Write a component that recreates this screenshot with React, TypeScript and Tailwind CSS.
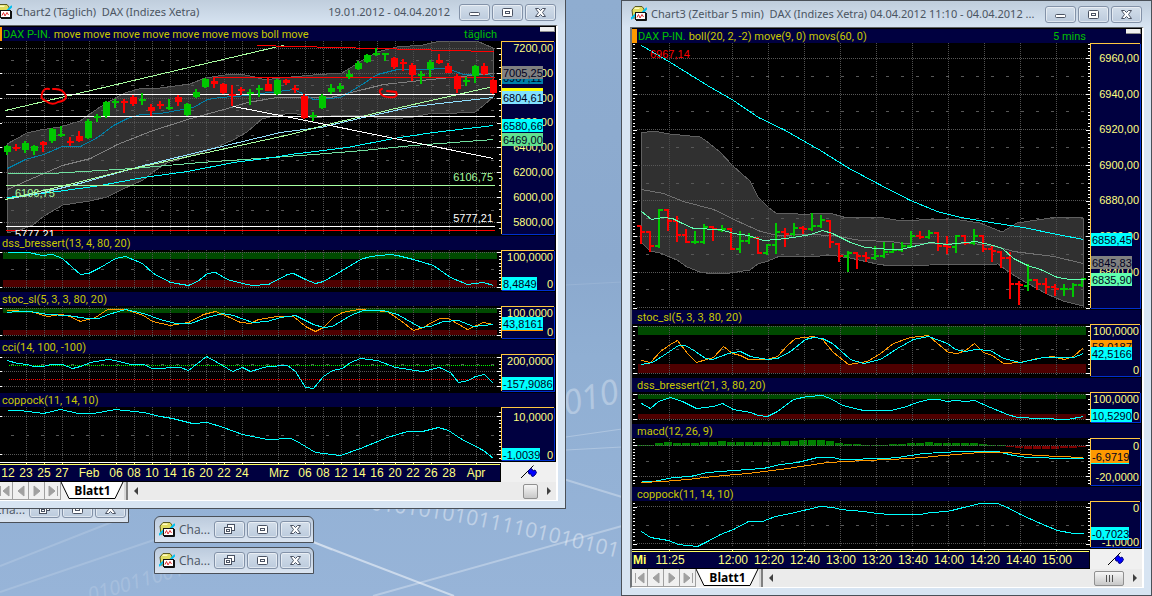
import React from 'react';

type Point = [number, number];

interface Line {
  color: string;
  points: string;
  width?: number;
}

interface Tag {
  text: string;
  y: number;
  color: string;
  width?: number;
}

interface PanelData {
  title: string;
  top: number;
  height: number;
  levels: number[];
  mids?: number[];
  ticks: { from: number; step: number; count: number };
  zones?: { y: number; height: number; color: string }[];
  lines: Line[];
  labels: [string, number][];
  tags: Tag[];
}

interface ChartLayout {
  x: number;
  plotEnd: number;
  right: number;
  columns: number[];
}

const CYAN = '#00ffff';
const ORANGE = '#ff9900';
const GREEN = '#00c800';
const RED = '#ff0000';

const GREEN_ZONE = '#004a00';
const RED_ZONE = '#4e0000';

const daily: ChartLayout = {
  x: -3,
  plotEnd: 501,
  right: 556,
  columns: [26, 44, 62, 89, 116, 134, 152, 170, 188, 206, 224, 242, 278, 305, 323, 341, 359, 377, 395, 413, 431, 449, 476],
};

const intraday: ChartLayout = {
  x: 632,
  plotEnd: 1090,
  right: 1142,
  columns: [669, 732, 768, 804, 840, 876, 912, 948, 984, 1020, 1056],
};

// direction, high, low, body top, body bottom
const candles: [string, number, number, number, number][] = [
  ['g', 145, 155, 146, 152], ['r', 144, 151, 147, 149], ['g', 141, 153, 143, 150], ['g', 145, 155, 146, 151],
  ['r', 141, 152, 142, 145], ['g', 128, 143, 129, 141], ['g', 126, 137, 134, 136], ['r', 137, 146, 141, 143],
  ['r', 131, 142, 136, 141], ['g', 119, 139, 121, 138], ['g', 114, 122, 116, 118], ['g', 101, 118, 102, 116],
  ['g', 99, 108, 101, 103], ['r', 99, 113, 101, 103], ['r', 95, 106, 97, 104], ['g', 93, 105, 99, 101],
  ['r', 104, 116, 107, 111], ['r', 101, 109, 104, 106], ['g', 99, 110, 107, 109], ['r', 95, 106, 97, 102],
  ['g', 103, 116, 104, 115], ['g', 89, 98, 92, 97], ['g', 78, 88, 79, 87], ['r', 77, 88, 81, 84],
  ['r', 83, 94, 84, 93], ['r', 85, 106, 94, 96], ['r', 87, 95, 89, 91], ['g', 89, 105, 92, 94],
  ['g', 85, 97, 88, 90], ['r', 77, 91, 84, 91], ['g', 79, 95, 80, 94], ['r', 79, 85, 80, 83],
  ['r', 85, 93, 88, 90], ['r', 94, 119, 96, 118], ['g', 112, 121, 115, 117], ['g', 94, 109, 96, 108],
  ['g', 84, 94, 88, 92], ['g', 83, 92, 86, 89], ['g', 70, 79, 74, 77], ['g', 61, 70, 63, 69],
  ['g', 54, 63, 55, 62], ['g', 48, 56, 53, 55], ['g', 53, 61, 53, 55], ['r', 57, 69, 58, 67],
  ['r', 59, 71, 62, 64], ['r', 63, 81, 65, 75], ['g', 71, 84, 74, 76], ['g', 60, 77, 62, 69],
  ['r', 54, 64, 60, 63], ['r', 63, 73, 66, 73], ['r', 74, 93, 76, 89], ['g', 77, 86, 80, 82],
  ['g', 65, 83, 66, 76], ['r', 63, 75, 66, 74], ['r', 79, 94, 80, 93],
];

// direction, open, high, low, close
const bars: [string, number, number, number, number][] = [
  ['r', 226, 226, 243, 232], ['r', 232, 231, 251, 246], ['g', 246, 209, 247, 210], ['r', 210, 209, 230, 221],
  ['r', 221, 216, 241, 235], ['r', 235, 229, 242, 242], ['g', 242, 231, 243, 242], ['g', 242, 224, 243, 227],
  ['r', 227, 226, 240, 229], ['g', 230, 225, 231, 229], ['r', 229, 228, 249, 249], ['g', 249, 231, 252, 241],
  ['g', 241, 233, 243, 237], ['r', 238, 237, 253, 253], ['g', 253, 244, 254, 245], ['g', 245, 223, 253, 232],
  ['r', 232, 228, 246, 234], ['g', 234, 223, 235, 228], ['r', 228, 226, 233, 229], ['g', 229, 213, 230, 226],
  ['g', 226, 215, 227, 220], ['r', 221, 220, 247, 242], ['r', 244, 243, 261, 256], ['g', 256, 251, 271, 253],
  ['r', 253, 252, 268, 256], ['r', 256, 252, 261, 258], ['g', 258, 246, 259, 256], ['g', 256, 242, 257, 252],
  ['g', 252, 243, 252, 250], ['g', 250, 242, 251, 246], ['g', 246, 231, 247, 236], ['r', 236, 231, 238, 237],
  ['g', 237, 230, 238, 233], ['r', 233, 232, 250, 246], ['r', 246, 236, 253, 247], ['g', 247, 235, 252, 236],
  ['r', 236, 235, 244, 243], ['g', 243, 229, 244, 236], ['r', 236, 235, 251, 249], ['r', 249, 246, 261, 251],
  ['r', 252, 251, 267, 258], ['r', 258, 252, 298, 284], ['r', 284, 281, 304, 285], ['g', 286, 264, 290, 280],
  ['r', 280, 279, 289, 284], ['r', 284, 278, 293, 287], ['r', 287, 284, 295, 289], ['g', 289, 284, 295, 289],
  ['g', 289, 283, 296, 285], ['g', 285, 278, 286, 279],
];

const histogram = [
  1, 1, 3, 4, 3, 3, 3, 4, 4, 5, 4, 4, 4, 4, 4, 4, 5, 5, 6, 6, 6, 5, 3, 2, 2, 1, 1, 1, 2, 2, 3, 3, 4, 3, 3, 3, 3, 3, 2, 1, 1,
  -1, -2, -3, -3, -3, -3, -2, -2, -1,
];

const dailyPanels: PanelData[] = [
  {
    title: 'price',
    top: 41,
    height: 195,
    levels: [48, 73, 98, 122, 147, 172, 197, 222],
    mids: [60, 85, 110, 135, 160, 185, 210],
    ticks: { from: 48, step: 6.21, count: 30 },
    lines: [
      { color: '#808080', points: '7,189 27,180 62,165 90,158 117,144 150,131 187,119 227,108 247,102 277,97 300,97 330,97 363,89 383,84 430,79 493,73' },
      { color: '#0080a8', points: '7,168 25,159 43,154 62,146 80,146 97,137 113,125 127,118 140,114 160,113 193,107 207,99 220,97 247,95 260,93 278,91 293,89 300,92 313,99 340,97 357,87 377,74 397,69 420,69 447,68 463,74 487,73 493,77' },
      { color: '#a8ffa0', points: '5,110 278,46 284,45' },
      { color: '#70e0a0', points: '7,173 50,173 133,168 200,162 273,157 313,154 363,150 413,145 493,139' },
      { color: CYAN, points: '7,197 57,191 100,185 143,177 187,171 233,162 273,157 290,154 347,147 393,138 433,132 493,125' },
      { color: '#90e0ff', points: '5,199 43,192 83,182 143,165 213,148 280,132 320,127 363,117 413,106 457,101 493,97' },
      { color: '#a8ffa0', points: '5,199 60,186 133,168 290,134 323,125 395,108 493,86' },
      { color: '#ffffff', points: '5,94 494,94' },
      { color: '#ffffff', points: '5,116 494,116' },
      { color: '#ffffff', points: '5,226 494,226' },
      { color: '#a8ffa0', points: '5,185 494,185' },
      { color: RED, points: '5,230 494,230' },
      { color: RED, points: '256,45 275,45 276,46 316,46 317,47 355,47 356,48 396,48 397,49 430,49 431,50 470,50 471,51 493,51' },
      { color: RED, points: '213,77 494,77' },
      { color: '#ffffff', points: '233,106 290,117 493,158' },
    ],
    labels: [['7200,00', 48], ['7000,00', 73], ['6800,00', 98], ['6600,00', 122], ['6400,00', 147], ['6200,00', 172], ['6000,00', 197], ['5800,00', 222]],
    tags: [
      { text: '6967,11', y: 71, color: '#0080a8' },
      { text: '7005,25', y: 66, color: '#808080' },
      { text: '', y: 88, color: '#ffff00' },
      { text: '6804,61', y: 91, color: '#80e0ff' },
      { text: '6580,66', y: 119, color: CYAN },
      { text: '6469,00', y: 133, color: '#60e090' },
    ],
  },
  {
    title: 'dss_bressert(13, 4, 80, 20)',
    top: 250,
    height: 42,
    levels: [252, 287],
    mids: [269],
    ticks: { from: 252, step: 3.5, count: 11 },
    zones: [{ y: 252, height: 7, color: GREEN_ZONE }, { y: 280, height: 7, color: RED_ZONE }],
    lines: [
      { color: CYAN, points: '7,252 28,252 42,255 52,254 62,258 80,274 88,273 100,267 115,258 125,256 142,263 153,273 170,282 188,285 197,281 207,273 215,272 227,279 242,283 252,285 268,284 287,274 293,273 305,279 315,283 323,281 342,270 360,259 370,256 390,254 397,255 413,259 433,265 450,277 467,284 483,282 493,285' },
    ],
    labels: [['100,0000', 257], ['0', 284]],
    tags: [{ text: '8,4849', y: 277, color: CYAN, width: 35 }],
  },
  {
    title: 'stoc_sl(5, 3, 3, 80, 20)',
    top: 306,
    height: 34,
    levels: [308, 335],
    ticks: { from: 308, step: 2.7, count: 11 },
    zones: [{ y: 308, height: 5, color: GREEN_ZONE }, { y: 330, height: 5, color: RED_ZONE }],
    lines: [
      { color: ORANGE, points: '7,310 30,311 47,316 60,314 67,315 80,321 95,317 107,309 125,309 143,315 152,321 170,325 188,322 203,314 215,311 227,316 240,322 250,323 258,319 277,316 293,316 305,326 315,331 323,327 333,317 342,312 358,309 387,311 400,320 413,330 423,327 433,321 440,318 448,318 467,329 483,322 493,324' },
      { color: CYAN, points: '7,312 17,311 30,311 47,314 67,315 87,318 98,318 108,314 125,309 143,313 160,319 175,323 190,323 207,317 222,313 233,315 252,322 267,321 280,317 295,315 313,324 323,327 332,326 350,315 363,310 383,310 397,314 420,327 430,326 443,321 458,320 473,326 493,324' },
    ],
    labels: [['100,0000', 313], ['0', 332]],
    tags: [
      { text: '', y: 318, color: ORANGE },
      { text: '43,8161', y: 317, color: CYAN },
    ],
  },
  {
    title: 'cci(14, 100, -100)',
    top: 354,
    height: 39,
    levels: [357, 371, 386],
    mids: [364],
    ticks: { from: 357, step: 3.6, count: 9 },
    lines: [
      { color: CYAN, points: '7,360 17,363 27,364 33,366 43,366 50,364 62,364 72,368 80,366 90,362 107,359 115,360 130,364 143,364 152,368 180,367 188,370 197,363 206,356 217,362 232,371 242,367 250,371 267,366 287,365 295,371 305,387 313,388 323,376 332,370 342,368 350,362 360,358 377,360 395,367 422,371 439,367 450,372 458,382 468,380 475,376 484,374 493,383' },
    ],
    labels: [['200,0000', 361]],
    tags: [{ text: '-157,9086', y: 377, color: CYAN, width: 51 }],
  },
  {
    title: 'coppock(11, 14, 10)',
    top: 407,
    height: 55,
    levels: [416, 454],
    mids: [435],
    ticks: { from: 412, step: 3.8, count: 13 },
    lines: [
      { color: CYAN, points: '7,410 20,410 43,413 60,409 78,413 93,413 115,409 143,412 160,416 172,418 192,423 207,422 223,427 242,434 267,439 290,438 295,440 315,452 340,455 360,448 387,437 407,431 422,431 438,427 448,430 460,438 483,450 493,458' },
    ],
    labels: [['10,0000', 417], ['0', 455]],
    tags: [{ text: '-1,0039', y: 448, color: CYAN, width: 38 }],
  },
];

const intradayPanels: PanelData[] = [
  {
    title: 'price',
    top: 43,
    height: 267,
    levels: [58, 94, 129, 165, 200, 236, 272, 307],
    mids: [76, 111, 147, 183, 218, 254, 289],
    ticks: { from: 44.2, step: 3.56, count: 75 },
    lines: [
      { color: '#707070', points: '641,189 663,193 683,201 713,209 740,222 760,231 777,235 807,234 833,235 860,240 890,241 903,243 930,243 973,243 1000,247 1013,251 1053,256 1083,263' },
      { color: CYAN, points: '641,45 670,62 707,85 733,100 758,117 783,129 820,150 847,167 877,183 910,200 937,211 960,217 997,223 1023,227 1057,234 1083,239' },
    ],
    labels: [['6960,00', 58], ['6940,00', 94], ['6920,00', 129], ['6900,00', 165], ['6880,00', 200], ['6860,00', 236], ['6840,00', 272]],
    tags: [
      { text: '6858,45', y: 233, color: CYAN },
      { text: '6845,83', y: 256, color: '#808080' },
      { text: '6835,90', y: 273, color: '#60ffb0' },
    ],
  },
  {
    title: 'stoc_sl(5, 3, 3, 80, 20)',
    top: 324,
    height: 54,
    levels: [326, 373],
    mids: [349],
    ticks: { from: 326, step: 4.7, count: 11 },
    zones: [{ y: 326, height: 9, color: GREEN_ZONE }, { y: 364, height: 9, color: RED_ZONE }],
    lines: [
      { color: ORANGE, points: '641,360 650,362 660,351 670,344 677,340 687,353 696,362 713,357 723,346 732,353 740,355 748,359 767,359 777,356 787,345 795,338 813,336 822,339 833,352 848,364 867,361 880,353 893,343 910,337 928,335 937,343 948,352 957,353 965,350 974,343 983,352 992,355 1003,363 1020,362 1037,358 1052,356 1064,359 1073,356 1083,347' },
      { color: CYAN, points: '641,364 652,362 663,355 678,345 685,345 695,351 705,358 712,359 728,353 740,351 750,356 767,359 777,358 790,351 805,339 813,337 822,338 832,343 840,350 850,359 863,363 880,359 897,348 913,339 928,336 947,343 955,349 965,351 975,349 990,350 1003,358 1020,362 1043,357 1073,357 1083,353' },
    ],
    labels: [['100,0000', 331], ['0', 370]],
    tags: [
      { text: '58,0187', y: 340, color: ORANGE },
      { text: '42,5166', y: 347, color: CYAN },
    ],
  },
  {
    title: 'dss_bressert(21, 3, 80, 20)',
    top: 392,
    height: 32,
    levels: [394, 419],
    ticks: { from: 394, step: 5, count: 6 },
    zones: [{ y: 394, height: 5, color: GREEN_ZONE }, { y: 414, height: 5, color: RED_ZONE }],
    lines: [
      { color: CYAN, points: '641,403 650,408 658,401 670,397 682,401 696,408 713,406 722,403 733,409 750,412 758,415 767,416 777,411 793,399 807,396 822,395 832,399 842,405 863,410 890,410 903,407 917,402 928,399 938,399 947,401 955,400 965,401 974,400 990,407 1007,414 1017,417 1040,418 1067,419 1083,416' },
    ],
    labels: [['100,0000', 399], ['0', 416]],
    tags: [{ text: '10,5290', y: 409, color: CYAN }],
  },
  {
    title: 'macd(12, 26, 9)',
    top: 438,
    height: 49,
    levels: [445, 476],
    mids: [461],
    ticks: { from: 439.2, step: 3.1, count: 15 },
    lines: [
      { color: CYAN, points: '641,481 653,481 673,477 690,476 707,472 720,471 747,469 763,468 780,464 797,462 817,457 833,457 840,459 885,458 897,457 923,453 960,451 997,451 1013,455 1027,457 1070,458 1083,458' },
      { color: ORANGE, points: '641,482 663,481 687,479 713,476 747,473 780,469 807,465 827,462 847,461 863,460 890,459 923,457 943,455 980,452 1007,452 1023,454 1057,456 1083,457' },
    ],
    labels: [['0', 446], ['-20,0000', 477]],
    tags: [
      { text: '', y: 451, color: CYAN, width: 38 },
      { text: '-6,9719', y: 450, color: ORANGE, width: 38 },
    ],
  },
  {
    title: 'coppock(11, 14, 10)',
    top: 501,
    height: 48,
    levels: [506, 543],
    mids: [525],
    ticks: { from: 502.8, step: 3.7, count: 12 },
    lines: [
      { color: CYAN, points: '641,531 650,537 668,540 678,544 697,546 707,541 720,534 733,529 748,521 762,521 775,516 790,513 820,506 833,507 840,509 863,511 877,513 890,514 920,514 930,512 947,511 963,507 980,503 997,503 1007,507 1020,514 1040,523 1057,530 1073,533 1083,533' },
    ],
    labels: [['0', 508], ['-1,0000', 542]],
    tags: [{ text: '-0,7023', y: 527, color: CYAN, width: 38 }],
  },
];

const dailyBand =
  '7,144 27,133 40,130 60,127 80,121 100,107 110,101 125,93 142,88 160,88 190,84 205,78 225,75 240,74 255,77 265,80 280,78 313,75 342,73 363,60 377,52 397,47 423,45 440,41 477,41 493,48 493,97 483,106 475,112 457,113 433,113 413,117 393,119 377,118 367,115 340,115 313,118 293,113 277,115 262,119 247,132 233,140 210,150 187,157 167,163 153,172 143,180 123,189 107,197 90,201 63,205 44,216 33,225 20,230 7,233';

const intradayBand =
  '641,133 653,131 670,134 700,137 705,140 720,152 733,166 742,174 750,181 758,197 768,207 777,214 793,213 803,215 817,213 833,214 847,218 877,217 890,219 902,221 937,219 953,219 980,223 1002,232 1017,223 1057,217 1083,218 1083,306 1063,301 1047,294 1027,283 1010,273 998,264 930,265 890,266 877,264 850,258 830,255 820,256 780,256 768,261 758,264 750,270 730,273 713,274 700,272 687,267 677,260 660,253 650,251 641,242';

const dailyTimes: [string, number][] = [
  ['12', 8], ['23', 26], ['25', 44], ['27', 62], ['Feb', 89], ['06', 116], ['08', 134], ['10', 152], ['14', 170], ['16', 188],
  ['20', 206], ['22', 224], ['24', 242], ['Mrz', 279], ['06', 305], ['08', 323], ['12', 341], ['14', 359], ['16', 377],
  ['20', 395], ['22', 413], ['26', 431], ['28', 449], ['Apr', 476],
];

const intradayTimes: [string, number][] = [
  ['11:25', 670], ['12:00', 733], ['12:20', 769], ['12:40', 805], ['13:00', 841], ['13:20', 877], ['13:40', 913],
  ['14:00', 949], ['14:20', 985], ['14:40', 1021], ['15:00', 1057],
];

const ChartIcon = () => (
  <svg width="16" height="16" viewBox="0 0 16 16" className="shrink-0" aria-hidden="true">
    <path d="M1 4 L4 0.5 H11 L13 3 V12 H2 Z" fill="#e0dc60" stroke="#5a5a20" strokeWidth="1" />
    <path d="M4 1.5 H9 L8 3 H3 Z" fill="#fffbc0" />
    <path d="M0 13 L5 8 M11 7 L16 2" stroke="#00c0f0" strokeWidth="2" />
    <rect x="4.5" y="6.5" width="10" height="7" fill="#fff" stroke="#111" />
    <path d="M5 14.5 H15.5 V7" fill="none" stroke="#111" strokeWidth="1" />
    <path d="M6 11.5 L7.5 8.5 L9 12 L11 8.5 L12.5 11" fill="none" stroke="#e03030" strokeWidth="1" />
  </svg>
);

type Glyph = 'minimize' | 'restore' | 'maximize' | 'close';

const glyphLabels: Record<Glyph, string> = {
  minimize: 'Minimieren',
  restore: 'Wiederherstellen',
  maximize: 'Maximieren',
  close: 'Schließen',
};

const CaptionButton: React.FC<{ glyph: Glyph }> = ({ glyph }) => (
  <button
    type="button"
    aria-label={glyphLabels[glyph]}
    className="flex h-[17px] w-[31px] items-center justify-center rounded-[3px] border border-[#8392a8] bg-linear-to-b from-[#d3deea] to-[#bccbdd] shadow-[inset_0_0_0_1px_rgba(255,255,255,0.5)]"
  >
    <svg width="13" height="11" viewBox="0 0 13 11" fill="#fff" stroke="#4a5262">
      {glyph === 'minimize' && <rect x="1.5" y="5.5" width="10" height="3" rx="1" />}
      {glyph === 'maximize' && (
        <>
          <rect x="1.5" y="1.5" width="10" height="8" rx="1" />
          <rect x="4.5" y="4.5" width="4" height="2" />
        </>
      )}
      {glyph === 'restore' && (
        <>
          <rect x="4.5" y="0.5" width="7" height="6" />
          <rect x="1.5" y="3.5" width="7" height="6" />
          <rect x="3.5" y="5.5" width="3" height="2" />
        </>
      )}
      {glyph === 'close' && (
        <path d="M1.5 1.5 H4.5 L6.5 3.5 L8.5 1.5 H11.5 L8.5 5.5 L11.5 9.5 H8.5 L6.5 7.5 L4.5 9.5 H1.5 L4.5 5.5 Z" />
      )}
    </svg>
  </button>
);

const pairs = (points: string): Point[] => points.split(' ').map((p) => p.split(',').map(Number) as Point);

const shift = (points: string) => pairs(points).map(([x, y]) => `${x + 0.5},${y + 0.5}`).join(' ');

const PlotGrid: React.FC<{ panel: PanelData; layout: ChartLayout }> = ({ panel, layout }) => {
  const end = layout.plotEnd - 4;
  return (
    <g fill="none">
      {layout.columns.map((x) => (
        <path key={x} d={`M${x + 0.5} ${panel.top} V${panel.top + panel.height - 2}`} stroke="#505050" strokeDasharray="1 1" />
      ))}
      {panel.levels.map((y) => (
        <path key={y} d={`M${layout.x + 5} ${y + 0.5} H${end}`} stroke="#585858" strokeDasharray="1 1" />
      ))}
      {panel.mids?.map((y) => (
        <path key={y} d={`M${layout.x + 14} ${y + 0.5} H${end}`} stroke="#585858" strokeDasharray="3 12" />
      ))}
    </g>
  );
};

const Ticks: React.FC<{ panel: PanelData; layout: ChartLayout }> = ({ panel, layout }) => {
  const { from, step, count } = panel.ticks;
  const nearLevel = (y: number) => panel.levels.some((l) => Math.abs(l - y) < step / 2);
  return (
    <g fill="#fff">
      {Array.from({ length: count }, (_, i) => Math.round(from + i * step)).map((y) => {
        const size = nearLevel(y) ? 4 : 2;
        return (
          <g key={y}>
            <rect x={layout.plotEnd - size} y={y} width={size} height="1" />
            <rect x={layout.x + 1} y={y} width={size} height="1" />
          </g>
        );
      })}
    </g>
  );
};

const Axis: React.FC<{ panel: PanelData; layout: ChartLayout }> = ({ panel, layout }) => {
  const width = layout.right - layout.plotEnd;
  const bottom = panel.top + panel.height - 2;
  return (
    <svg
      width={width}
      height={panel.height}
      viewBox={`${layout.plotEnd} ${panel.top} ${width} ${panel.height}`}
      className="shrink-0 font-['Liberation_Sans',sans-serif] text-[11px]"
      shapeRendering="crispEdges"
    >
      <rect x={layout.plotEnd} y={panel.top} width={width - 1} height={panel.height - 1} fill="#000040" />
      {panel.labels.map(([text, y]) => (
        <text key={text} x={layout.right - 3} y={y + 4} textAnchor="end" fill="#ffff80">
          {text}
        </text>
      ))}
      {panel.tags.map((tag) => (
        <g key={tag.text + tag.y}>
          <rect x={layout.plotEnd + 1} y={tag.y} width={tag.width ?? 41} height="13" fill={tag.color} />
          {tag.text && (
            <text x={layout.plotEnd + 2} y={tag.y + 11} fill="#000020">
              {tag.text}
            </text>
          )}
        </g>
      ))}
      <path d={`M${layout.plotEnd} ${panel.top + 0.5} H${layout.right - 2} M${layout.plotEnd + 0.5} ${panel.top} V${bottom}`} stroke="#ffc840" />
      <path d={`M${layout.plotEnd + 1} ${bottom + 0.5} H${layout.right - 1} M${layout.right - 1.5} ${panel.top + 1} V${bottom}`} stroke="#0030d0" />
    </svg>
  );
};

const Candles = () => (
  <g>
    {candles.map(([dir, high, low, top, bottom], i) => (
      <g key={i} fill={dir === 'g' ? GREEN : RED}>
        <rect x={6 + i * 9} y={high} width="2" height={low - high} />
        <rect x={4 + i * 9} y={top} width="7" height={bottom - top} />
      </g>
    ))}
  </g>
);

const Bars = () => (
  <g>
    {bars.map(([dir, open, high, low, close], i) => (
      <g key={i} fill={dir === 'g' ? GREEN : RED}>
        <rect x={640 + i * 9} y={high} width="2" height={low - high + 1} />
        <rect x={637 + i * 9} y={open - 1} width="4" height="2" />
        <rect x={641 + i * 9} y={close - 1} width="4" height="2" />
      </g>
    ))}
  </g>
);

interface PanelProps {
  panel: PanelData;
  layout: ChartLayout;
  header?: React.ReactNode;
  back?: React.ReactNode;
  front?: React.ReactNode;
}

const Panel: React.FC<PanelProps> = ({ panel, layout, header, back, front }) => (
  <section>
    <h2 className="relative mr-px flex h-[14px] items-stretch overflow-hidden bg-[#000040] pl-[5px] font-['Roboto',sans-serif] text-[11px] leading-[16px] whitespace-pre text-[#c8c800]">
      {header ?? panel.title}
    </h2>
    <div className="flex">
      <svg
        height={panel.height}
        viewBox={`${layout.x} ${panel.top} ${layout.plotEnd - layout.x} ${panel.height}`}
        preserveAspectRatio="xMaxYMin meet"
        className="min-w-0 flex-1 font-['Liberation_Sans',sans-serif] text-[11px]"
        shapeRendering="crispEdges"
      >
        {back}
        {panel.zones?.map((zone) => (
          <rect key={zone.y} x={layout.x + 6} y={zone.y} width={layout.plotEnd - layout.x - 10} height={zone.height} fill={zone.color} />
        ))}
        <PlotGrid panel={panel} layout={layout} />
        {panel.lines.map((line, i) => (
          <polyline key={i} points={shift(line.points)} fill="none" stroke={line.color} strokeWidth={line.width ?? 1} />
        ))}
        {front}
        <Ticks panel={panel} layout={layout} />
      </svg>
      <Axis panel={panel} layout={layout} />
    </div>
  </section>
);

interface TimeAxisProps {
  layout: ChartLayout;
  times: [string, number][];
  day?: string;
}

const TimeAxis: React.FC<TimeAxisProps> = ({ layout, times, day }) => {
  const width = layout.plotEnd - layout.x;
  return (
    <div className="flex h-[20px]">
      <svg
        height="20"
        viewBox={`${layout.x} 0 ${width} 20`}
        preserveAspectRatio="xMaxYMin meet"
        className="min-w-0 flex-1 font-['Liberation_Sans',sans-serif] text-[12px]"
        shapeRendering="crispEdges"
      >
        <rect x={layout.x} y="3" width={width - 1} height="16" fill="#000040" />
        <rect x={layout.x} y="0" width={width} height="1" fill="#fff" />
        <rect x={layout.x} y="2" width={width - 1} height="1" fill="#ffff60" />
        {layout.columns.map((x) => (
          <rect key={x} x={x} y="1" width="1" height="2" fill="#ffff60" />
        ))}
        {day && (
          <text x={layout.x + 1} y="15" fill="#ffff60" fontWeight="bold">
            {day}
          </text>
        )}
        {times.map(([text, x]) => (
          <text key={x} x={x} y="15" textAnchor="middle" fill="#ffff80">
            {text}
          </text>
        ))}
      </svg>
      <div className="flex shrink-0 items-center justify-center bg-[#f0f0f0]" style={{ width: layout.right - layout.plotEnd }}>
        <svg width="18" height="14" viewBox="0 0 18 14" aria-hidden="true">
          <path d="M1 13 L13.5 0.5" stroke="#000" />
          <path d="M8 6 L11 3.5 L12 4 L13 6 L15 5 L16.5 7.5 L15 10 L13 11.5 L11.5 11 L11 9 L9 9 Z" fill="#0000ff" stroke="#000080" />
        </svg>
      </div>
    </div>
  );
};

const navGlyphs = [
  { label: 'Erstes Blatt', d: 'M2.5 2 V12 M11 2 L5 7 L11 12 Z' },
  { label: 'Vorheriges Blatt', d: 'M10 2 L4 7 L10 12 Z' },
  { label: 'Nächstes Blatt', d: 'M4 2 L10 7 L4 12 Z' },
  { label: 'Letztes Blatt', d: 'M11.5 2 V12 M3 2 L9 7 L3 12 Z' },
];

const SheetBar: React.FC<{ grip?: boolean }> = ({ grip }) => (
  <div className="flex h-[18px] items-stretch bg-[#f0f0f0] font-['Open_Sans',sans-serif]">
    {navGlyphs.map((nav) => (
      <button key={nav.label} type="button" aria-label={nav.label} className="flex w-[16px] items-center justify-center border-r border-b border-[#a0a0a0] bg-[#f0f0f0]">
        <svg width="14" height="14" viewBox="0 0 14 14">
          <path d={nav.d} fill="#a0a0a0" stroke="#a0a0a0" />
        </svg>
      </button>
    ))}
    <button type="button" className="relative w-[63px] text-[12px] leading-[16px] font-bold text-black">
      <svg viewBox="0 0 63 18" className="absolute inset-0 h-full w-full" aria-hidden="true">
        <path d="M0 0 L8 16.5 H54 L62 0 Z" fill="#fff" />
        <path d="M0 0 L8 16.5 H54 L62 0" fill="none" stroke="#000" />
      </svg>
      <span className="relative">Blatt1</span>
    </button>
    <div className="w-[4px] border-r-2 border-[#808080] bg-[#d8d8d8]" />
    <div className="flex flex-1 items-center justify-between bg-[#ebebeb] pr-[4px] pl-[6px]">
      <button type="button" aria-label="Nach links" className="flex h-[12px] w-[6px] items-center">
        <svg width="5" height="8" viewBox="0 0 5 8">
          <path d="M4 0 V8 L0 4 Z" fill="#404040" />
        </svg>
      </button>
      <div className="flex items-center gap-[8px]">
        <button
          type="button"
          aria-label="Bildlaufleiste"
          className={`flex h-[15px] items-center justify-center gap-[2px] rounded-[2px] border border-[#909090] bg-linear-to-b from-[#f6f6f6] to-[#c8c8c8] ${grip ? 'w-[30px]' : 'w-[15px]'}`}
        >
          {grip && [0, 1, 2].map((i) => <span key={i} className="h-[7px] w-px bg-[#505050]" />)}
        </button>
        <button type="button" aria-label="Nach rechts" className="flex h-[12px] w-[6px] items-center">
          <svg width="5" height="8" viewBox="0 0 5 8">
            <path d="M1 0 V8 L5 4 Z" fill="#404040" />
          </svg>
        </button>
      </div>
    </div>
  </div>
);

interface ChartWindowProps {
  title: string;
  range?: string;
  className: string;
  grip?: boolean;
  children: React.ReactNode;
}

const ChartWindow: React.FC<ChartWindowProps> = ({ title, range, className, grip, children }) => (
  <article className={`absolute border border-[#4a5058] bg-[#d7e4f2] pr-[7px] pb-[7px] pl-[8px] ${className}`}>
    <header className="-mr-[7px] -ml-[8px] flex h-[26px] items-center gap-[4px] bg-linear-to-b from-[#bfcddc] to-[#d7e4f2] pr-[9px] pl-[9px] font-['Noto_Sans',sans-serif] text-[11px] text-[#4b5562]">
      <ChartIcon />
      <h1 className="flex-1 truncate whitespace-pre">{title}</h1>
      {range && <span className="pr-[5px]">{range}</span>}
      <div className="flex gap-[2px]">
        <CaptionButton glyph="minimize" />
        <CaptionButton glyph="maximize" />
        <CaptionButton glyph="close" />
      </div>
    </header>
    <div className="border-t border-r-2 border-b border-l-2 border-t-[#606468] border-r-white border-b-white border-l-[#707478] bg-black">
      <div className="pt-px">{children}</div>
      <SheetBar grip={grip} />
    </div>
  </article>
);

const MinimizedWindow: React.FC<{ className: string }> = ({ className }) => (
  <article className={`absolute flex h-[27px] w-[160px] items-center gap-[4px] rounded-t-[6px] border border-[#4a5058] bg-linear-to-b from-[#bccbdd] to-[#dbe5f1] px-[4px] font-['Open_Sans',sans-serif] text-[12px] text-[#4b5562] ${className}`}>
    <ChartIcon />
    <span className="flex-1">Cha...</span>
    <div className="flex gap-[2px]">
      <CaptionButton glyph="restore" />
      <CaptionButton glyph="maximize" />
      <CaptionButton glyph="close" />
    </div>
  </article>
);

const PriceHeader: React.FC<{ studies: string; interval: string; right: string }> = ({ studies, interval, right }) => (
  <>
    <span className="mr-px -ml-[5px] w-[5px] bg-[#ff9900]" />
    <span className="text-[#00c000]">DAX P-IN.</span>
    <span className="flex-1 pl-[3px]">{studies}</span>
    <span className={`text-[#00c000] ${right}`}>{interval}</span>
    <span className="absolute top-0 right-0 h-[5px] w-[15px] border-r border-b border-[#909090] bg-[#f0f0f0]" />
  </>
);

const Wallpaper = () => (
  <svg className="absolute inset-0 h-full w-full" viewBox="0 0 1152 596" preserveAspectRatio="xMinYMin slice" aria-hidden="true">
    <defs>
      <linearGradient id="sky" x1="0" y1="0" x2="0" y2="1">
        <stop offset="0" stopColor="#8fadd0" />
        <stop offset="0.44" stopColor="#8ba9ce" />
        <stop offset="0.6" stopColor="#90afd3" />
        <stop offset="1" stopColor="#97b4d8" />
      </linearGradient>
      <path id="digits" d="M370 510 C 440 516 520 534 660 568" />
    </defs>
    <rect width="1152" height="596" fill="url(#sky)" />
    <g stroke="#fff" fill="none">
      <path d="M566 285 L622 282" opacity="0.1" />
      <path d="M566 437 L622 429 M566 450 L622 447" opacity="0.25" />
      <path d="M560 478 L622 497 M373 596 L622 526" opacity="0.3" strokeWidth="2" />
      <path d="M300 537 L454 596" opacity="0.5" strokeWidth="2" />
      <path d="M0 592 L154 540 M0 566 L130 515 M314 542 L332 550" opacity="0.15" strokeWidth="2" />
    </g>
    <g fill="#fff" className="font-['Open_Sans',sans-serif]">
      <text fontSize="21" opacity="0.4">
        <textPath href="#digits">010101010111101010101</textPath>
      </text>
      <text fontSize="34" fontStyle="italic" opacity="0.3" transform="translate(548 420) rotate(-14)">
        0010
      </text>
      <text fontSize="20" fontStyle="italic" opacity="0.14" transform="translate(90 602) rotate(-16)">
        0100110011
      </text>
    </g>
  </svg>
);

const App: React.FC = () => {
  const [dailyPrice, ...dailyStudies] = dailyPanels;
  const [intradayPrice, ...intradayStudies] = intradayPanels;

  return (
    <main className="relative h-screen w-full overflow-hidden bg-[#92b0d5]">
      <Wallpaper />
      <MinimizedWindow className="top-[496px] -left-[31px]" />
      <MinimizedWindow className="top-[516px] left-[154px]" />
      <MinimizedWindow className="top-[547px] left-[154px]" />

      <ChartWindow title="Chart2 (Täglich)  DAX (Indizes Xetra)" range="19.01.2012 - 04.04.2012" className="-top-[2px] -left-[14px] w-[580px]">
        <Panel
          panel={dailyPrice}
          layout={daily}
          header={<PriceHeader studies="move move move move move move movs boll move" interval="täglich" right="pr-[58px]" />}
          back={<polygon points={dailyBand} fill="#303030" stroke="#606060" />}
          front={
            <>
              <Candles />
              <g fill="#a8ffa0">
                <text x="15" y="197">6106,75</text>
                <text x="493" y="181" textAnchor="end">6106,75</text>
              </g>
              <g fill="#fff">
                <text x="15" y="238">5777,21</text>
                <text x="493" y="222" textAnchor="end">5777,21</text>
              </g>
              <g fill="none" stroke="#ff0000" strokeWidth="2" strokeLinecap="round" shapeRendering="auto">
                <path d="M49 89 Q43 88 42 94 Q40 99 46 101 Q52 106 58 102 Q66 101 66 96 Q63 88 53 89" />
                <path d="M382 89 Q378 90 381 94 Q384 98 394 97 Q398 96 396 92 L387 91" />
              </g>
            </>
          }
        />
        {dailyStudies.map((panel) => (
          <Panel
            key={panel.title}
            panel={panel}
            layout={daily}
            back={
              panel.title.startsWith('cci') && (
                <g strokeDasharray="1 1" fill="none">
                  <path d="M9 365.5 H494" stroke="#00ff00" />
                  <path d="M9 379.5 H494" stroke="#ff0000" />
                </g>
              )
            }
          />
        ))}
        <TimeAxis layout={daily} times={dailyTimes} />
      </ChartWindow>

      <ChartWindow title="Chart3 (Zeitbar 5 min)  DAX (Indizes Xetra) 04.04.2012 11:10 - 04.04.2012 ..." grip className="top-0 right-0 left-[621px]">
        <Panel
          panel={intradayPrice}
          layout={intraday}
          header={<PriceHeader studies="boll(20, 2, -2) move(9, 0) movs(60, 0)" interval="5 mins" right="pr-[55px]" />}
          back={<polygon points={intradayBand} fill="#303030" stroke="#606060" />}
          front={
            <>
              <Bars />
              <polyline
                points={shift('641,211 651,219 662,217 672,218 682,223 693,228 720,229 733,233 748,235 763,240 777,239 793,237 810,234 822,230 832,233 850,242 865,247 890,249 900,249 913,246 930,242 947,244 975,241 993,245 1002,248 1013,258 1027,265 1040,269 1057,277 1070,279 1083,279')}
                fill="none"
                stroke="#60ffb0"
              />
              <text x="650" y="58" fill="#ff0000">6967,14</text>
            </>
          }
        />
        {intradayStudies.map((panel) => (
          <Panel
            key={panel.title}
            panel={panel}
            layout={intraday}
            back={
              panel.title.startsWith('macd') &&
              histogram.map((size, i) => (
                <rect
                  key={i}
                  x={637 + i * 9}
                  y={size > 0 ? 446 - size : 446}
                  width="8"
                  height={Math.abs(size)}
                  fill={size > 0 ? '#008000' : '#800000'}
                />
              ))
            }
          />
        ))}
        <TimeAxis layout={intraday} times={intradayTimes} day="Mi" />
      </ChartWindow>
    </main>
  );
};

export default App;
